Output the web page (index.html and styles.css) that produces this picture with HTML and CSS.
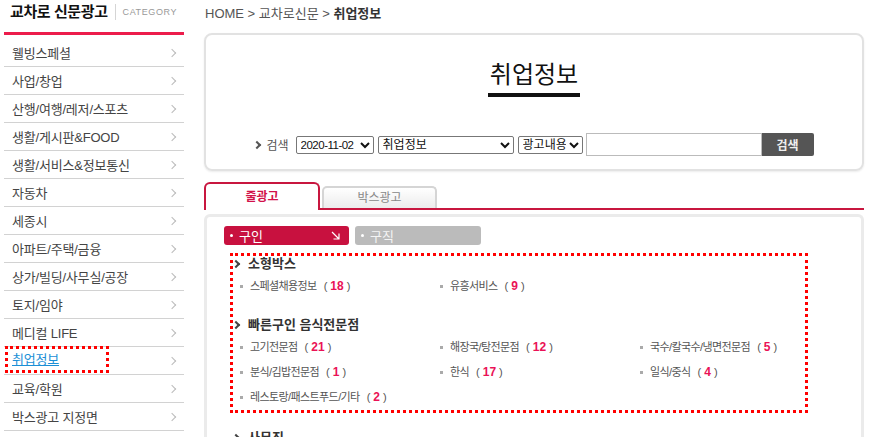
FILE: index.html
```html
<!DOCTYPE html>
<html lang="ko">
<head>
    <meta charset="UTF-8">
    <title>교차로 신문광고 || 취업정보</title>
    <link rel="stylesheet" href="styles.css">
</head>
<body>
<div class="page">
    <aside class="side">
        <div class="side-head">
            <h1>교차로 신문광고</h1>
            <span class="side-cat">CATEGORY</span>
        </div>
        <ul class="cat-list">
            <li><a href="#">웰빙스페셜</a></li>
            <li><a href="#">사업/창업</a></li>
            <li><a href="#">산행/여행/레저/스포츠</a></li>
            <li><a href="#">생활/게시판&amp;FOOD</a></li>
            <li><a href="#">생활/서비스&amp;정보통신</a></li>
            <li><a href="#">자동차</a></li>
            <li><a href="#">세종시</a></li>
            <li><a href="#">아파트/주택/금융</a></li>
            <li><a href="#">상가/빌딩/사무실/공장</a></li>
            <li><a href="#">토지/임야</a></li>
            <li><a href="#">메디컬 LIFE</a></li>
            <li class="on"><a href="#"><span class="mark"><u>취업정보</u></span></a></li>
            <li><a href="#">교육/학원</a></li>
            <li><a href="#">박스광고 지정면</a></li>
        </ul>
    </aside>

    <main class="main">
        <p class="crumb">HOME &gt; 교차로신문 &gt; <strong>취업정보</strong></p>

        <section class="search-box">
            <h2 class="page-title"><span>취업정보</span></h2>
            <form class="search" action="#" method="get">
                <span class="search-label">검색</span>
                <select class="sel-date"><option>2020-11-02</option></select>
                <select class="sel-cat"><option>취업정보</option></select>
                <select class="sel-field"><option>광고내용</option></select>
                <input type="text" class="search-input">
                <button type="submit" class="search-btn">검색</button>
            </form>
        </section>

        <ul class="tabs">
            <li class="tab on">줄광고</li>
            <li class="tab">박스광고</li>
        </ul>

        <section class="ad-box">
            <div class="kind">
                <a href="#" class="kind-btn on">구인
                    <svg class="kind-arrow" width="9" height="9" viewBox="0 0 9 9"><path d="M1 1 L8 8 M8 2.5 V8 H2.5" fill="none" stroke="#fff" stroke-width="1.2"/></svg>
                </a>
                <a href="#" class="kind-btn">구직</a>
            </div>

            <div class="ad-group marked">
                <h3>소형박스</h3>
                <ul class="ad-list">
                    <li>스페셜채용정보<span class="cnt">(<b>18</b>)</span></li>
                    <li>유흥서비스<span class="cnt">(<b>9</b>)</span></li>
                </ul>
                <h3 class="next">빠른구인 음식전문점</h3>
                <ul class="ad-list">
                    <li>고기전문점<span class="cnt">(<b>21</b>)</span></li>
                    <li>해장국/탕전문점<span class="cnt">(<b>12</b>)</span></li>
                    <li>국수/칼국수/냉면전문점<span class="cnt">(<b>5</b>)</span></li>
                    <li>분식/김밥전문점<span class="cnt">(<b>1</b>)</span></li>
                    <li>한식<span class="cnt">(<b>17</b>)</span></li>
                    <li>일식/중식<span class="cnt">(<b>4</b>)</span></li>
                    <li>레스토랑/패스트푸드/기타<span class="cnt">(<b>2</b>)</span></li>
                </ul>
            </div>

            <div class="ad-group">
                <h3>사무직</h3>
                <ul class="ad-list">
                    <li>경리/회계<span class="cnt">(<b>6</b>)</span></li>
                    <li>사무보조<span class="cnt">(<b>3</b>)</span></li>
                </ul>
            </div>
        </section>
    </main>
</div>
</body>
</html>
```

FILE: styles.css
```css
* {
    box-sizing: border-box;
}
body {
    margin: 0;
    font-family: "Liberation Sans", "Noto Sans CJK KR", sans-serif;
    font-size: 12px;
    color: #444;
    background: #fff;
}
a {
    color: inherit;
    text-decoration: none;
}
ul {
    list-style: none;
    margin: 0;
    padding: 0;
}

.page {
    display: flex;
    align-items: flex-start;
}

/* left category menu */
.side {
    width: 184px;
    flex-shrink: 0;
    padding-left: 4px;
}
.side-head {
    height: 35px;
    display: flex;
    align-items: flex-start;
    padding: 3px 0 0 6px;
    border-bottom: 3px solid #ec1c4b;
}
.side-head h1 {
    margin: 0;
    font-size: 15px;
    line-height: 18px;
    letter-spacing: -0.4px;
    color: #111;
}
.side-cat {
    margin: 1px 0 0 7px;
    padding-left: 7px;
    border-left: 1px solid #d5d5d5;
    height: 16px;
    font-size: 9px;
    line-height: 17px;
    letter-spacing: 0.6px;
    color: #999;
}
.cat-list {
    padding-top: 4px;
}
.cat-list li {
    border-bottom: 1px solid #d2d2d2;
}
.cat-list a {
    display: flex;
    justify-content: space-between;
    align-items: center;
    height: 27px;
    padding: 0 9px 0 8px;
    font-size: 13px;
    letter-spacing: -0.2px;
    color: #444;
}
.cat-list a::after {
    content: "";
    width: 5px;
    height: 5px;
    border-top: 1px solid #bbb;
    border-right: 1px solid #bbb;
    transform: rotate(45deg);
}
.mark {
    display: inline-block;
    width: 98px;
    height: 21px;
    line-height: 21px;
    margin-left: -4px;
    margin-top: -2px;
    padding-left: 4px;
    outline: 3px dotted #f00;
    color: #1b8fd6;
}

/* main column */
.main {
    width: 660px;
    margin-left: 20px;
}
.crumb {
    margin: 0;
    height: 33px;
    padding: 5px 0 0 1px;
    font-size: 13px;
    line-height: 17px;
    color: #555;
}
.crumb strong {
    color: #333;
}

.search-box {
    height: 138px;
    padding-top: 26px;
    border: 2px solid #e2e2e2;
    border-radius: 8px;
    box-shadow: 0 1px 2px rgba(0, 0, 0, 0.08);
    text-align: center;
}
.page-title {
    margin: 0;
    font-size: 24px;
    font-weight: normal;
    line-height: 28px;
    color: #111;
}
.page-title span {
    display: inline-block;
    padding: 0 2px 4px;
    border-bottom: 4px solid #111;
}
.search {
    margin-top: 36px;
    height: 23px;
    display: flex;
    justify-content: center;
    align-items: center;
}
.search-label {
    display: flex;
    align-items: center;
    margin-right: 7px;
    color: #555;
    font-size: 12px;
}
.search-label::before {
    content: "";
    width: 4px;
    height: 4px;
    margin-right: 6px;
    border-top: 2px solid #555;
    border-right: 2px solid #555;
    transform: rotate(45deg);
}
.search select {
    height: 18px;
    padding: 0;
    margin-right: 4px;
    font-family: "Liberation Sans", "Noto Sans CJK KR", sans-serif;
    font-size: 12px;
    color: #111;
    border: 1px solid #777;
    border-radius: 2px;
    background: #fff;
}
.search .sel-date {
    width: 78px;
    font-size: 11.5px;
    letter-spacing: -0.5px;
}
.sel-cat {
    width: 136px;
}
.search .sel-field {
    width: 65px;
    margin-right: 3px;
}
.search-input {
    width: 176px;
    height: 23px;
    border: 1px solid #bbb;
    margin: 0;
}
.search-btn {
    width: 52px;
    height: 23px;
    border: none;
    border-radius: 0 2px 2px 0;
    background: #555;
    color: #eee;
    font-family: "Liberation Sans", "Noto Sans CJK KR", sans-serif;
    font-size: 12px;
    font-weight: bold;
    cursor: pointer;
}

/* tabs */
.tabs {
    margin-top: 11px;
    height: 28px;
    display: flex;
    align-items: flex-end;
    border-bottom: 2px solid #c8163f;
}
.tab {
    width: 115px;
    height: 22px;
    margin-left: 2px;
    border: 2px solid #d5d5d5;
    border-bottom: none;
    border-radius: 5px 5px 0 0;
    background: linear-gradient(#fff, #ececec);
    text-align: center;
    line-height: 20px;
    color: #888;
}
.tab.on {
    width: 116px;
    height: 28px;
    margin: 0 0 -2px 0;
    border-color: #c8163f;
    border-radius: 6px 6px 0 0;
    background: #fff;
    line-height: 26px;
    color: #d2114a;
    font-weight: bold;
}

/* ad listing */
.ad-box {
    margin-top: 4px;
    height: 260px;
    padding: 9px 0 0 17px;
    border: 3px solid #ebebeb;
    border-bottom: none;
    border-radius: 6px 6px 0 0;
}
.kind {
    display: flex;
    gap: 6px;
}
.kind-btn {
    width: 125px;
    height: 19px;
    display: flex;
    align-items: center;
    padding-left: 6px;
    border-radius: 3px;
    background: #bbb;
    color: #f4f4f4;
    font-size: 13px;
}
.kind-btn + .kind-btn {
    width: 126px;
}
.kind-btn::before {
    content: "";
    width: 3px;
    height: 3px;
    margin-right: 6px;
    border-radius: 50%;
    background: #fff;
}
.kind-btn.on {
    background: #c8113f;
    color: #fff;
}
.kind-arrow {
    margin-left: auto;
    margin-right: 9px;
}

.ad-group {
    width: 578px;
    margin: 8px 0 0 6px;
    border: 3px solid transparent;
}
.ad-group.marked {
    border: 3px dotted #f00;
}
.ad-group + .ad-group {
    margin-top: 14px;
}
.ad-group h3 {
    margin: 0;
    display: flex;
    align-items: center;
    font-size: 13px;
    line-height: 16px;
    color: #333;
}
.ad-group h3::before {
    content: "";
    width: 4px;
    height: 4px;
    margin: 0 9px 0 0;
    border-top: 2px solid #444;
    border-right: 2px solid #444;
    transform: rotate(45deg);
}
.ad-group h3.next {
    margin-top: 18px;
}
.ad-list {
    margin-top: 2px;
    padding-left: 7px;
    display: grid;
    grid-template-columns: repeat(3, 200px);
}
.ad-list li {
    display: flex;
    align-items: center;
    line-height: 25px;
    font-size: 11px;
    letter-spacing: -0.6px;
    color: #555;
}
.ad-list li::before {
    content: "";
    width: 3px;
    height: 3px;
    margin-right: 7px;
    background: #aaa;
}
.cnt {
    margin-left: 7px;
    letter-spacing: 0;
}
.ad-list b {
    margin: 0 3px;
    color: #ea1256;
    font-size: 12px;
}
```
